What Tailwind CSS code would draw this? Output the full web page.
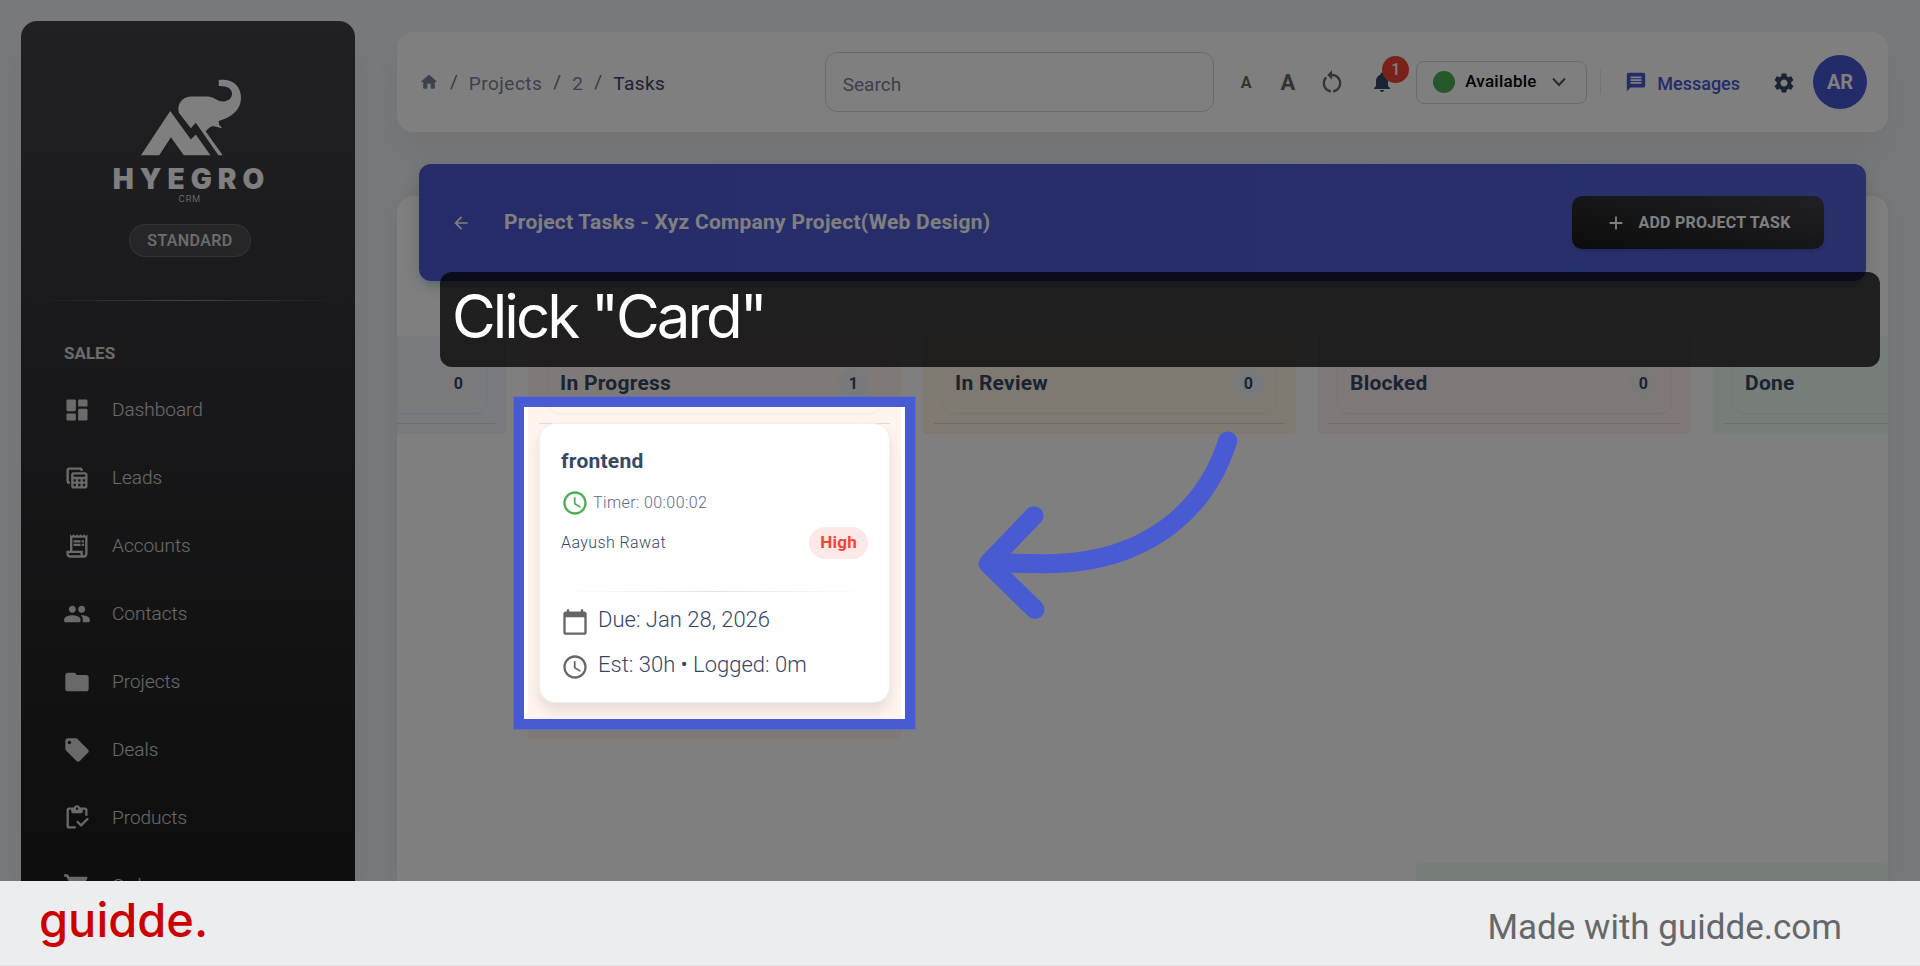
<!DOCTYPE html>
<html lang="en">
<head>
    <meta charset="UTF-8">
    <meta name="viewport" content="width=device-width, initial-scale=1.0">
    <title>Hyegro CRM - Project Tasks</title>
    <script src="https://cdn.jsdelivr.net/npm/@tailwindcss/browser@4"></script>
</head>
<body class="h-screen flex flex-col overflow-hidden bg-[#f0f2f5] font-['Roboto',sans-serif] text-[#344767]">

    <!-- App -->
    <div class="relative flex-1 min-h-0 flex overflow-hidden">

        <!-- Sidebar -->
        <aside class="ml-[21px] mt-[21px] w-[334px] shrink-0 overflow-hidden rounded-t-2xl bg-linear-to-b from-[#42424a] to-[#1c1c1c] text-white shadow-[0_20px_27px_0_rgba(0,0,0,0.05)]">
            <div class="flex flex-col items-center pt-[57px] pl-1">
                <svg class="w-[103px] h-[80px]" viewBox="417 233 310 240" fill="currentColor" aria-hidden="true">
                    <path d="M511 332 573 418 588 403 632 465H552L513 411 478 465H423Z"/>
                    <path d="M573 384 537 337C530 310 548 290 572 288H625C645 290 652 303 670 303C688 302 697 292 697 280C697 265 683 256 657 257V239C695 233 724 255 724 292C724 325 700 350 657 362L658 373 668 384C655 382 645 376 637 378C628 381 622 388 618 394L669 465H656L588 367Z"/>
                </svg>
                <p class="mt-[7px] pl-[3px] font-['Inter',sans-serif] text-[28px] leading-7 font-black tracking-[6px]">HYEGRO</p>
                <p class="text-[9px] leading-3 font-light tracking-[1px]">CRM</p>
                <span class="mt-[19px] h-[33px] px-[17px] flex items-center rounded-full border border-white/15 bg-white/10 text-base font-medium tracking-wide text-white/80">STANDARD</span>
            </div>
            <div class="mt-[43px] mx-3 h-px bg-linear-to-r from-transparent via-white/40 to-transparent"></div>
            <h6 class="mt-[42px] ml-[43px] text-[17px] leading-5 font-bold text-white/80">SALES</h6>
            <nav class="mt-[13px] ml-[42px] text-[19px] font-light text-white/80">
                <a href="#" class="h-[68px] flex items-center gap-[21px]">
                    <svg class="size-7" viewBox="0 0 24 24" fill="currentColor"><rect x="3" y="3" width="8" height="10" rx="1"/><rect x="3" y="15" width="8" height="6" rx="1"/><rect x="13" y="11" width="8" height="10" rx="1"/><rect x="13" y="3" width="8" height="6" rx="1"/></svg>
                    Dashboard
                </a>
                <a href="#" class="h-[68px] flex items-center gap-[21px]">
                    <svg class="size-7" viewBox="0 0 24 24" fill="currentColor"><path d="M19 7H9c-1.1 0-2 .9-2 2v10c0 1.1.9 2 2 2h10c1.1 0 2-.9 2-2V9c0-1.1-.9-2-2-2zm0 2v2H9V9h10zm-6 6v-2h2v2h-2zm2 2v2h-2v-2h2zm-4-2H9v-2h2v2zm6-2h2v2h-2v-2zm-8 4h2v2H9v-2zm8 2v-2h2v2h-2zM6 17H5c-1.1 0-2-.9-2-2V5c0-1.1.9-2 2-2h10c1.1 0 2 .9 2 2v1h-2V5H5v10h1v2z"/></svg>
                    Leads
                </a>
                <a href="#" class="h-[68px] flex items-center gap-[21px]">
                    <svg class="size-7" viewBox="0 0 24 24" fill="currentColor"><path d="M19.5 3.5L18 2l-1.5 1.5L15 2l-1.5 1.5L12 2l-1.5 1.5L9 2 7.5 3.5 6 2v14H3v3c0 1.66 1.34 3 3 3h12c1.66 0 3-1.34 3-3V2l-1.5 1.5zM15 20H6c-.55 0-1-.45-1-1v-1h10v2zm4-1c0 .55-.45 1-1 1s-1-.45-1-1v-3H8V5h11v14z"/><path d="M9 7h6v2H9zM16 7h2v2h-2zM9 10h6v2H9zM16 10h2v2h-2z"/></svg>
                    Accounts
                </a>
                <a href="#" class="h-[68px] flex items-center gap-[21px]">
                    <svg class="size-7" viewBox="0 0 24 24" fill="currentColor"><path d="M16 11c1.66 0 2.99-1.34 2.99-3S17.66 5 16 5c-1.66 0-3 1.34-3 3s1.34 3 3 3zm-8 0c1.66 0 2.99-1.34 2.99-3S9.66 5 8 5C6.34 5 5 6.34 5 8s1.34 3 3 3zm0 2c-2.33 0-7 1.17-7 3.5V18c0 .55.45 1 1 1h12c.55 0 1-.45 1-1v-1.5c0-2.33-4.67-3.5-7-3.5zm8 0c-.29 0-.62.02-.97.05 1.16.84 1.97 1.97 1.97 3.45V18c0 .35-.07.69-.18 1H22c.55 0 1-.45 1-1v-1.5c0-2.33-4.67-3.5-7-3.5z"/></svg>
                    Contacts
                </a>
                <a href="#" class="h-[68px] flex items-center gap-[21px]">
                    <svg class="size-7" viewBox="0 0 24 24" fill="currentColor"><path d="M10 4H4c-1.1 0-1.99.9-1.99 2L2 18c0 1.1.9 2 2 2h16c1.1 0 2-.9 2-2V8c0-1.1-.9-2-2-2h-8l-2-2z"/></svg>
                    Projects
                </a>
                <a href="#" class="h-[68px] flex items-center gap-[21px]">
                    <svg class="size-7" viewBox="0 0 24 24" fill="currentColor"><path d="M21.41 11.58l-9-9C12.05 2.22 11.55 2 11 2H4c-1.1 0-2 .9-2 2v7c0 .55.22 1.05.59 1.42l9 9c.36.36.86.58 1.41.58.55 0 1.05-.22 1.41-.59l7-7c.37-.36.59-.86.59-1.41 0-.55-.23-1.06-.59-1.42zM5.5 7C4.67 7 4 6.33 4 5.5S4.67 4 5.5 4 7 4.67 7 5.5 6.33 7 5.5 7z"/></svg>
                    Deals
                </a>
                <a href="#" class="h-[68px] flex items-center gap-[21px]">
                    <svg class="size-7" viewBox="0 0 24 24" fill="currentColor"><path d="M5 5h2v1c0 1.1.9 2 2 2h6c1.1 0 2-.9 2-2V5h2v5h2V5c0-1.1-.9-2-2-2h-4.18C14.4 1.84 13.3 1 12 1s-2.4.84-2.82 2H5c-1.1 0-2 .9-2 2v14c0 1.1.9 2 2 2h6v-2H5V5zm7-2c.55 0 1 .45 1 1s-.45 1-1 1-1-.45-1-1 .45-1 1-1z"/><path d="M21.7 12.2c-.4-.4-1-.4-1.4 0L15.5 17l-2.3-2.3c-.4-.4-1-.4-1.4 0s-.4 1 0 1.4l3 3c.4.4 1 .4 1.4 0l5.5-5.5c.4-.4.4-1 0-1.4z"/></svg>
                    Products
                </a>
                <a href="#" class="h-[68px] flex items-center gap-[21px]">
                    <svg class="size-7" viewBox="0 0 24 24" fill="currentColor"><path d="M7 18c-1.1 0-1.99.9-1.99 2S5.9 22 7 22s2-.9 2-2-.9-2-2-2zM1 2v2h2l3.6 7.59-1.35 2.45c-.16.28-.25.61-.25.96 0 1.1.9 2 2 2h12v-2H7.42c-.14 0-.25-.11-.25-.25l.03-.12.9-1.63h7.45c.75 0 1.41-.41 1.75-1.03l3.58-6.49A1 1 0 0 0 20 4H5.21l-.94-2H1z"/></svg>
                    Orders
                </a>
            </nav>
        </aside>

        <!-- Main column -->
        <main class="flex-1 min-w-0 flex flex-col ml-[42px] mr-8 pt-8">

            <!-- Top bar -->
            <header class="h-[100px] shrink-0 pl-[22px] pr-[21px] flex items-center rounded-2xl bg-white shadow-[0_20px_27px_0_rgba(0,0,0,0.05)]">
                <nav class="mr-auto flex items-center gap-[11px] text-[19px] text-[#7b809a]" aria-label="Breadcrumb">
                    <a href="#" aria-label="Home"><svg class="size-5" viewBox="0 0 24 24" fill="currentColor"><path d="M10 19v-5h4v5c0 .55.45 1 1 1h3c.55 0 1-.45 1-1v-7h1.7c.46 0 .68-.57.33-.87L12.67 3.6c-.38-.34-.96-.34-1.34 0l-8.36 7.53c-.34.3-.13.87.33.87H5v7c0 .55.45 1 1 1h3c.55 0 1-.45 1-1z"/></svg></a>
                    <span class="text-[#6c757d]">/</span>
                    <a href="#" class="pt-1 tracking-wide">Projects</a>
                    <span class="text-[#6c757d]">/</span>
                    <a href="#" class="pt-1 tracking-wide">2</a>
                    <span class="text-[#6c757d]">/</span>
                    <span class="pt-1 tracking-wide text-[#344767]">Tasks</span>
                </nav>
                <input type="text" placeholder="Search" aria-label="Search" class="w-[389px] h-[60px] px-[17px] pt-1 rounded-xl border border-[#d2d6da] bg-white text-[19px] placeholder:text-[#7b809a]">
                <button class="ml-[27px] pt-[2px] text-base leading-none font-bold text-[#666]">A</button>
                <button class="ml-[29px] pt-px text-[22px] leading-none font-bold text-[#666]">A</button>
                <button class="ml-[23px] text-[#666]" aria-label="Reset text size">
                    <svg class="size-7" viewBox="0 0 24 24" fill="currentColor"><path d="M12 5V2L8 6l4 4V7c3.31 0 6 2.69 6 6 0 2.97-2.17 5.43-5 5.91v2.02c3.95-.49 7-3.85 7-7.93 0-4.42-3.58-8-8-8zm-6 8c0-1.65.67-3.15 1.76-4.24L6.34 7.34C4.9 8.79 4 10.79 4 13c0 4.08 3.05 7.44 7 7.93v-2.02c-2.83-.48-5-2.94-5-5.91z"/></svg>
                </button>
                <button class="relative ml-6" aria-label="Notifications">
                    <svg class="size-6" viewBox="0 0 24 24" fill="currentColor"><path d="M12 22c1.1 0 2-.9 2-2h-4c0 1.1.89 2 2 2zm6-6v-5c0-3.07-1.64-5.64-4.5-6.32V4c0-.83-.67-1.5-1.5-1.5s-1.5.67-1.5 1.5v.68C7.63 5.36 6 7.92 6 11v5l-2 2v1h16v-1l-2-2z"/></svg>
                    <span class="absolute -top-[14px] left-3 size-[27px] flex items-center justify-center rounded-full bg-[#f44335] text-base font-medium text-white">1</span>
                </button>
                <div class="ml-[22px] h-[43px] w-[171px] pl-4 pr-5 flex items-center rounded-lg border border-[#d2d6da] text-black">
                    <span class="size-[22px] shrink-0 rounded-full bg-[#4caf50]"></span>
                    <select class="ml-[10px] flex-1 min-w-0 appearance-none text-[17px] font-medium tracking-[0.25px]" aria-label="Availability">
                        <option>Available</option>
                        <option>Away</option>
                    </select>
                    <svg class="w-[14px] h-[10px] shrink-0 text-[#555]" viewBox="0 0 14 10" fill="none" stroke="currentColor" stroke-width="2"><path d="M1 1.5 7 8l6-6.5"/></svg>
                </div>
                <div class="ml-[13px] w-px h-6 bg-[#e4e6ea]"></div>
                <a href="#" class="ml-6 flex items-center gap-[10px] text-lg font-medium text-[#4857d3]">
                    <svg class="size-[22px]" viewBox="0 0 24 24" fill="currentColor"><path d="M20 2H4c-1.1 0-1.99.9-1.99 2L2 22l4-4h14c1.1 0 2-.9 2-2V4c0-1.1-.9-2-2-2zm-2 12H6v-2h12v2zm0-3H6V9h12v2zm0-3H6V6h12v2z"/></svg>
                    <span class="pt-[3px]">Messages</span>
                </a>
                <button class="ml-8 pt-[2px]" aria-label="Settings">
                    <svg class="size-6" viewBox="0 0 24 24" fill="currentColor"><path d="M19.14 12.94c.04-.3.06-.61.06-.94 0-.32-.02-.64-.07-.94l2.03-1.58c.18-.14.23-.41.12-.61l-1.92-3.32c-.12-.22-.37-.29-.59-.22l-2.39.96c-.5-.38-1.03-.7-1.62-.94l-.36-2.54c-.04-.24-.24-.41-.48-.41h-3.84c-.24 0-.43.17-.47.41l-.36 2.54c-.59.24-1.13.57-1.62.94l-2.39-.96c-.22-.08-.47 0-.59.22L2.74 8.87c-.12.21-.08.47.12.61l2.03 1.58c-.05.3-.09.63-.09.94s.02.64.07.94l-2.03 1.58c-.18.14-.23.41-.12.61l1.92 3.32c.12.22.37.29.59.22l2.39-.96c.5.38 1.03.7 1.62.94l.36 2.54c.05.24.24.41.48.41h3.84c.24 0 .44-.17.47-.41l.36-2.54c.59-.24 1.13-.56 1.62-.94l2.39.96c.22.08.47 0 .59-.22l1.92-3.32c.12-.22.07-.47-.12-.61l-2.01-1.58zM12 15.6c-1.98 0-3.6-1.62-3.6-3.6s1.62-3.6 3.6-3.6 3.6 1.62 3.6 3.6-1.62 3.6-3.6 3.6z"/></svg>
                </button>
                <button class="ml-[17px] size-[54px] rounded-full bg-[#4857d3] text-xl font-bold text-white">AR</button>
            </header>

            <!-- Tasks card -->
            <section class="mt-16 flex-1 min-h-0 flex flex-col rounded-t-2xl bg-white shadow-[0_4px_20px_0_rgba(0,0,0,0.08)]">
                <div class="-mt-8 mx-[22px] h-[117px] shrink-0 pl-8 pr-[42px] flex items-center rounded-xl bg-linear-to-r from-[#4a58d2] to-[#5362da] text-white shadow-[0_4px_20px_0_rgba(0,0,0,0.14),0_7px_10px_-5px_rgba(0,187,212,0.4)]">
                    <a href="#" aria-label="Back"><svg class="size-5" viewBox="0 0 24 24" fill="currentColor"><path d="M20 11H7.83l5.59-5.59L12 4l-8 8 8 8 1.41-1.41L7.83 13H20v-2z"/></svg></a>
                    <h1 class="ml-[33px] text-[21px] font-bold tracking-[0.25px]">Project Tasks - Xyz Company Project(Web Design)</h1>
                    <button class="ml-auto h-[53px] w-[252px] flex items-center justify-center gap-[11px] rounded-[10px] bg-linear-to-tr from-[#191919] to-[#42424a] text-base font-bold tracking-[0.25px] shadow-md">
                        <svg class="size-[22px]" viewBox="0 0 24 24" fill="currentColor"><path d="M19 13h-6v6h-2v-6H5v-2h6V5h2v6h6v2z"/></svg>
                        ADD PROJECT TASK
                    </button>
                </div>

                <!-- Board, scrolled so that the first column is partly out of view -->
                <div class="mt-[55px] flex items-start gap-[22px] overflow-hidden text-[21px] font-bold tracking-[0.25px]">
                    <div class="w-[373px] shrink-0 -ml-[264px] pt-4 pb-[10px] rounded-sm bg-[#f2f4fd]">
                        <div class="mx-5 h-[61px] pt-[2px] px-3 flex items-center justify-between rounded-xl shadow-[0_1px_3px_0_rgba(0,0,0,0.06)]">
                            <h2>To Do</h2>
                            <span class="size-[31px] flex items-center justify-center rounded-full bg-[#f4f4f6] text-base">0</span>
                        </div>
                        <div class="mt-[10px] mx-[11px] h-px bg-[#dcdde2]"></div>
                    </div>

                    <div class="w-[373px] shrink-0 pt-4 pb-9 rounded-sm bg-[#fff5ee]">
                        <div class="mx-5 h-[61px] pt-[2px] px-3 flex items-center justify-between rounded-xl shadow-[0_1px_3px_0_rgba(0,0,0,0.06)]">
                            <h2>In Progress</h2>
                            <span class="size-[31px] flex items-center justify-center rounded-full bg-[#f0f2f5] text-base">1</span>
                        </div>
                        <div class="mt-[10px] mx-[11px] h-px bg-[#e2dad4]"></div>
                        <article class="-mt-px mx-[11px] h-[280px] px-[21px] pt-[25px] rounded-2xl bg-white border border-[#eef0f2] shadow-[0_8px_14px_0_rgba(0,0,0,0.1)] font-light">
                            <h3 class="leading-6 font-bold">frontend</h3>
                            <p class="mt-4 flex items-center gap-1 text-base leading-7 tracking-wide text-[#5b6b88]">
                                <svg class="size-7 text-[#4caf50]" viewBox="0 0 24 24" fill="currentColor"><path d="M11.99 2C6.47 2 2 6.48 2 12s4.47 10 9.99 10C17.52 22 22 17.52 22 12S17.52 2 11.99 2zM12 20c-4.42 0-8-3.58-8-8s3.58-8 8-8 8 3.58 8 8-3.58 8-8 8zm.5-13H11v6l5.25 3.15.75-1.23-4.5-2.67z"/></svg>
                                Timer: 00:00:02
                            </p>
                            <div class="mt-[10px] flex items-center justify-between text-base tracking-wide">
                                <span>Aayush Rawat</span>
                                <span class="h-8 px-[11px] flex items-center rounded-full bg-[#fce8e6] text-[17px] font-bold tracking-[0.25px] text-[#f44335]">High</span>
                            </div>
                            <div class="mt-8 h-px bg-linear-to-r from-transparent via-[#dfe2e8] to-transparent"></div>
                            <p class="mt-[14px] flex items-center gap-[9px] text-[22px] leading-7 tracking-normal">
                                <svg class="size-7 text-[#666]" viewBox="0 0 24 24" fill="currentColor"><path d="M20 3h-1V1h-2v2H7V1H5v2H4c-1.1 0-2 .9-2 2v16c0 1.1.9 2 2 2h16c1.1 0 2-.9 2-2V5c0-1.1-.9-2-2-2zm0 18H4V8h16v13z"/></svg>
                                <span class="pb-[3px]">Due: Jan 28, 2026</span>
                            </p>
                            <p class="mt-[14px] flex items-center gap-[9px] text-[22px] leading-7 tracking-normal">
                                <svg class="size-7 text-[#666]" viewBox="0 0 24 24" fill="currentColor"><path d="M11.99 2C6.47 2 2 6.48 2 12s4.47 10 9.99 10C17.52 22 22 17.52 22 12S17.52 2 11.99 2zM12 20c-4.42 0-8-3.58-8-8s3.58-8 8-8 8 3.58 8 8-3.58 8-8 8zm.5-13H11v6l5.25 3.15.75-1.23-4.5-2.67z"/></svg>
                                <span class="pb-[3px]">Est: 30h • Logged: 0m</span>
                            </p>
                        </article>
                    </div>

                    <div class="w-[373px] shrink-0 pt-4 pb-[10px] rounded-sm bg-[#fdf4e3]">
                        <div class="mx-5 h-[61px] pt-[2px] px-3 flex items-center justify-between rounded-xl shadow-[0_1px_3px_0_rgba(0,0,0,0.06)]">
                            <h2>In Review</h2>
                            <span class="size-[31px] flex items-center justify-center rounded-full bg-[#f0f2f5] text-base">0</span>
                        </div>
                        <div class="mt-[10px] mx-[11px] h-px bg-[#dcd6cc]"></div>
                    </div>

                    <div class="w-[373px] shrink-0 pt-4 pb-[10px] rounded-sm bg-[#fdf0f0]">
                        <div class="mx-5 h-[61px] pt-[2px] px-3 flex items-center justify-between rounded-xl shadow-[0_1px_3px_0_rgba(0,0,0,0.06)]">
                            <h2>Blocked</h2>
                            <span class="size-[31px] flex items-center justify-center rounded-full bg-[#f7f0f1] text-base">0</span>
                        </div>
                        <div class="mt-[10px] mx-[11px] h-px bg-[#e0d5d6]"></div>
                    </div>

                    <div class="w-[373px] shrink-0 pt-4 pb-[10px] rounded-sm bg-[#effaf1]">
                        <div class="mx-5 h-[61px] pt-[2px] px-3 flex items-center justify-between rounded-xl shadow-[0_1px_3px_0_rgba(0,0,0,0.06)]">
                            <h2>Done</h2>
                            <span class="size-[31px] flex items-center justify-center rounded-full bg-[#f0f2f5] text-base">0</span>
                        </div>
                        <div class="mt-[10px] mx-[11px] h-px bg-[#d4dfd6]"></div>
                    </div>
                </div>

                <div class="mt-auto ml-auto w-[472px] h-[18px] rounded-t-sm bg-[#effaf1]"></div>
            </section>
        </main>

        <!-- Guide overlay: spotlight, caption and arrow -->
        <div class="absolute left-[514px] top-[397px] w-[401px] h-[332px] border-[10px] border-[#485bd3] shadow-[0_0_0_1px_#6671b0,0_0_0_2000px_rgba(0,0,0,0.5)]"></div>
        <div class="absolute left-[440px] right-10 top-[272px] h-[95px] pl-3 rounded-xl bg-black/75">
            <p class="font-['Inter',sans-serif] text-[60px] leading-[88px] tracking-tighter text-white">Click "Card"</p>
        </div>
        <svg class="absolute left-[970px] top-[420px] w-[280px] h-[210px]" viewBox="970 420 280 210" fill="none" stroke="#485bd3" stroke-width="19" stroke-linecap="round" stroke-linejoin="round" aria-hidden="true">
            <path d="M1227.7 441C1204 515 1143 560 1056 563.5C1035 564 1012 563.5 990 562"/>
            <path d="M1034 515.7 988 563.5 1035 609.5"/>
        </svg>
    </div>

    <!-- Footer -->
    <footer class="h-[85px] shrink-0 pl-[39px] pr-[78px] flex items-center justify-between bg-[#ecedef] border-b border-[#dfe1e4]">
        <span class="pb-2 font-['Inter',sans-serif] text-[47px] leading-none font-medium text-[#c00]">guidde.</span>
        <a href="#" class="pt-2 text-[35px] leading-none text-[#666769]">Made with guidde.com</a>
    </footer>

</body>
</html>
